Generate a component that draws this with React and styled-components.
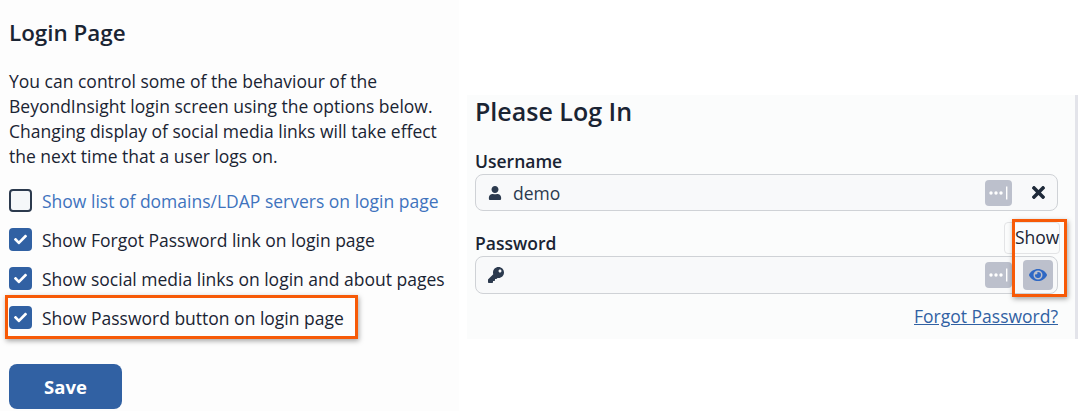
import React from 'react';
import styled, { createGlobalStyle } from 'styled-components';
import { FaUser, FaKey, FaTimes, FaEye, FaCheck } from 'react-icons/fa';

const GlobalStyle = createGlobalStyle`
  html, body {
    margin: 0;
    padding: 0;
    background: #ffffff;
  }
  body {
    font-family: "Open Sans", "Liberation Sans", sans-serif;
    color: #1a2433;
  }
`;

const Page = styled.div`
  width: 1082px;
  height: 411px;
  display: flex;
  overflow: hidden;
  position: relative;
`;

const SettingsPanel = styled.section`
  width: 459px;
  height: 411px;
  box-sizing: border-box;
  background: #fdfdfd;
  padding: 18px 0 0 9px;
  flex-shrink: 0;
`;

const Title = styled.h2`
  margin: 0;
  font-size: 22.4px;
  line-height: 30px;
  font-weight: 600;
  color: #1a2433;
`;

const Intro = styled.p`
  margin: 21px 0 0;
  font-size: 17.5px;
  line-height: 25px;
  color: #1a2433;
  width: 440px;
`;

const OptionList = styled.div`
  margin-top: 20px;
  display: flex;
  flex-direction: column;
  gap: 16px;
`;

const OptionRow = styled.label`
  display: flex;
  align-items: center;
  gap: 10px;
  height: 23px;
  font-size: 17.5px;
  white-space: nowrap;
  color: ${props => props.$link ? '#3f73bd' : '#1a2433'};
`;

const Box = styled.span`
  width: 23px;
  height: 23px;
  box-sizing: border-box;
  border-radius: 4px;
  display: flex;
  align-items: center;
  justify-content: center;
  color: #ffffff;
  background: ${props => props.$checked ? '#3161a3' : '#f5f7f9'};
  border: ${props => props.$checked ? 'none' : '2px solid #2c3a4e'};
`;

const SaveButton = styled.button`
  margin-top: 35px;
  width: 113px;
  height: 45px;
  border: none;
  border-radius: 8px;
  background: #3161a3;
  color: #ffffff;
  font-family: inherit;
  font-size: 18.5px;
  font-weight: 700;
`;

const LoginPanel = styled.section`
  margin: 95px 0 0 8px;
  width: 611px;
  height: 244px;
  box-sizing: border-box;
  background: #fbfcfc;
  border-right: 3px solid #e3e4ea;
  padding: 0 17px 0 8px;
  position: relative;
`;

const LoginTitle = styled.h2`
  margin: -1px 0 0;
  font-size: 25px;
  line-height: 34px;
  font-weight: 600;
  color: #1a2433;
`;

const FieldLabel = styled.div`
  font-size: 17.5px;
  line-height: 23px;
  font-weight: 600;
  color: #1a2433;
  margin-top: ${props => props.$top}px;
`;

const Field = styled.div`
  height: ${props => props.$height}px;
  box-sizing: border-box;
  margin-top: ${props => props.$gap}px;
  border: 1px solid #cfd2d6;
  border-radius: 8px;
  background: #f8f9fa;
  display: flex;
  align-items: center;
  padding: 0 4px 0 12px;
  color: #2c3a4e;
`;

const FieldText = styled.span`
  margin-left: 11px;
  font-size: 17.5px;
  color: #2c3a4e;
  flex: 1;
`;

const Spacer = styled.span`
  flex: 1;
`;

const DotsButton = styled.span`
  width: 27px;
  height: 26px;
  border-radius: 4px;
  background: #bcc0cc;
  display: flex;
  align-items: center;
  justify-content: center;
  margin-right: ${props => props.$gap}px;
`;

const ClearButton = styled.span`
  width: 30px;
  height: 30px;
  display: flex;
  align-items: center;
  justify-content: center;
  color: #1f2a3a;
`;

const EyeButton = styled.span`
  width: 30px;
  height: 30px;
  border-radius: 4px;
  background: #bcc0cc;
  display: flex;
  align-items: center;
  justify-content: center;
  color: #2f68c4;
`;

const ForgotRow = styled.div`
  text-align: right;
  margin-top: 11px;
`;

const ForgotLink = styled.a`
  font-size: 17.5px;
  line-height: 23px;
  color: #3161a3;
  text-decoration: underline;
`;

const Tooltip = styled.div`
  position: absolute;
  left: 537px;
  top: 127px;
  width: 56px;
  height: 32px;
  box-sizing: border-box;
  padding: 2px 0 0 10px;
  border: 1px solid #e3e4e6;
  border-radius: 4px;
  background: #fbfcfc;
  font-size: 17.5px;
  line-height: 24px;
  color: #1a2433;
`;

const Callout = styled.div`
  position: absolute;
  box-sizing: border-box;
  left: ${props => props.$left}px;
  top: ${props => props.$top}px;
  width: ${props => props.$width}px;
  height: ${props => props.$height}px;
  border: 3px solid #f75a07;
  box-shadow: 1px 2px 5px rgba(0, 0, 0, 0.35);
`;

const DotsIcon = () => (
  <svg width="21" height="14" viewBox="0 0 21 14">
    <circle cx="3" cy="7" r="1.7" fill="#fff" />
    <circle cx="8" cy="7" r="1.7" fill="#fff" />
    <circle cx="13" cy="7" r="1.7" fill="#fff" />
    <rect x="18" y="0.5" width="1.4" height="13" fill="#fff" />
  </svg>
);

const options = [
  { text: 'Show list of domains/LDAP servers on login page', checked: false, link: true },
  { text: 'Show Forgot Password link on login page', checked: true },
  { text: 'Show social media links on login and about pages', checked: true },
  { text: 'Show Password button on login page', checked: true },
];

export default function App() {
  return (
    <Page>
      <GlobalStyle />
      <SettingsPanel>
        <Title>Login Page</Title>
        <Intro>
          You can control some of the behaviour of the BeyondInsight login screen using the options below.
          Changing display of social media links will take effect the next time that a user logs on.
        </Intro>
        <OptionList>
          {options.map(option => (
            <OptionRow key={option.text} $link={option.link}>
              <Box $checked={option.checked}>
                {option.checked && <FaCheck size={13} />}
              </Box>
              {option.text}
            </OptionRow>
          ))}
        </OptionList>
        <SaveButton>Save</SaveButton>
      </SettingsPanel>

      <LoginPanel>
        <LoginTitle>Please Log In</LoginTitle>
        <FieldLabel $top={22}>Username</FieldLabel>
        <Field $height={37} $gap={1}>
          <FaUser size={14} />
          <FieldText>demo</FieldText>
          <DotsButton $gap={11}><DotsIcon /></DotsButton>
          <ClearButton><FaTimes size={19} /></ClearButton>
        </Field>
        <FieldLabel $top={21}>Password</FieldLabel>
        <Field $height={38} $gap={1}>
          <FaKey size={16} />
          <Spacer />
          <DotsButton $gap={11}><DotsIcon /></DotsButton>
          <EyeButton><FaEye size={18} /></EyeButton>
        </Field>
        <ForgotRow>
          <ForgotLink>Forgot Password?</ForgotLink>
        </ForgotRow>
        <Tooltip>Show</Tooltip>
      </LoginPanel>

      <Callout $left={5} $top={295} $width={353} $height={44} />
      <Callout $left={1012} $top={219} $width={55} $height={78} />
    </Page>
  );
}
